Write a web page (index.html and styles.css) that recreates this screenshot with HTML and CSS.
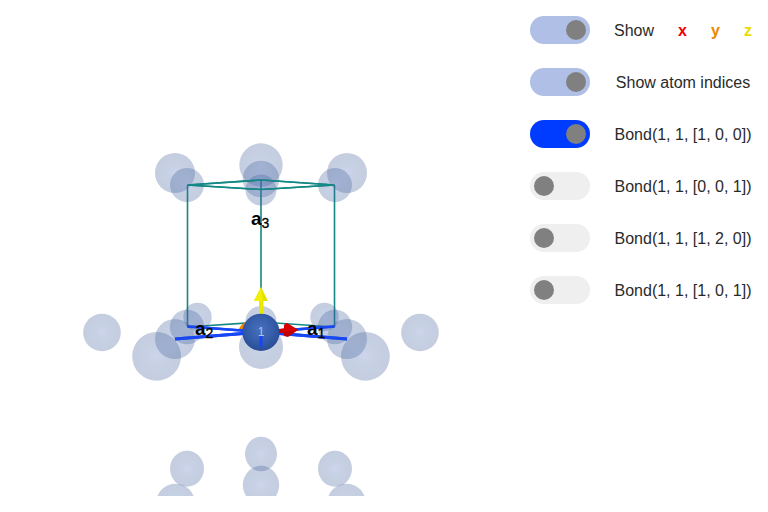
FILE: index.html
```html
<!DOCTYPE html>
<html lang="en">
<head>
<meta charset="utf-8">
<title>Crystal structure viewer</title>
<link rel="stylesheet" href="styles.css">
</head>
<body>
<main class="viewer">
  <svg class="scene" viewBox="16 16 490 480" role="img" aria-label="Crystal structure">
    <defs>
      <radialGradient id="ghost">
        <stop offset="0" stop-color="#5a74c0"/>
        <stop offset="0.35" stop-color="#4666a8"/>
        <stop offset="1" stop-color="#3c5c96"/>
      </radialGradient>
      <radialGradient id="solid" cx="0.48" cy="0.42" r="0.6">
        <stop offset="0" stop-color="#4770bd"/>
        <stop offset="0.5" stop-color="#3860ad"/>
        <stop offset="1" stop-color="#284c92"/>
      </radialGradient>
    </defs>

    <g class="cell">
      <path d="M187.5 185L261 180L334.5 185L261 189.5Z"/>
      <path d="M187.5 185V327M334.5 185V327M261 180V320"/>
      <path d="M187.5 327L261 322L334.5 327"/>
    </g>

    <path d="M239 329Q241 324 247 321V331Z" fill="#ef8400"/>
    <g class="bonds">
      <path d="M187.5 326.5L261 332L334.5 326.5"/>
      <path class="near" d="M175 339L261 332L347 339"/>
    </g>

    <g class="ghosts">
      <circle cx="175" cy="173" r="20"/>
      <circle cx="187" cy="185" r="17"/>
      <circle cx="347" cy="173" r="20"/>
      <circle cx="335" cy="185" r="17"/>
      <circle cx="261" cy="165" r="21.7"/>
      <circle cx="261" cy="179" r="18.3"/>
      <circle cx="261" cy="190" r="15.5"/>
      <circle cx="102" cy="332.5" r="18.8"/>
      <circle cx="420" cy="332.5" r="18.8"/>
      <circle cx="197.5" cy="317" r="14.2"/>
      <circle cx="324.5" cy="317" r="14.2"/>
      <circle cx="187" cy="327" r="17.2"/>
      <circle cx="335" cy="327" r="17.2"/>
      <circle cx="175" cy="339" r="20"/>
      <circle cx="347" cy="339" r="20"/>
      <circle cx="156.6" cy="356.3" r="24.4"/>
      <circle cx="365.4" cy="356.3" r="24.4"/>
      <circle cx="261" cy="321.5" r="15.5"/>
      <circle cx="261" cy="347" r="22"/>
      <ellipse cx="187" cy="468.7" rx="17" ry="18"/>
      <ellipse cx="335" cy="468.7" rx="17" ry="18"/>
      <ellipse cx="261" cy="454" rx="16" ry="17.2"/>
      <ellipse cx="261" cy="485" rx="18.2" ry="19.2"/>
      <circle cx="175.5" cy="503" r="19.3"/>
      <circle cx="346.5" cy="503" r="19.3"/>
    </g>

    <circle cx="261" cy="332.3" r="18.6" fill="url(#solid)"/>
    <path class="cell" d="M187.5 185L261 180L334.5 185L261 189.5Z"/>
    <g class="bonds">
      <path d="M187.5 326.5L243 330.5M283 330.5L334.5 326.5"/>
      <path class="near" d="M175 339L243 333.5M279 333.5L347 339"/>
      <path class="near" d="M261 335V347"/>
    </g>
    <path d="M279 329L285 328V333L279 333Z" fill="#d00000"/>
    <path d="M287 323L298 330L288 337L284 336L284 325Z" fill="#c00000"/>
    <path d="M287 323L298 330L284 332V325Z" fill="#d80000"/>
    <path d="M259 300H263.5V313.7H259Z" fill="#e8e800"/>
    <path d="M261 287L268 301H254Z" fill="#e2e000"/>
    <path d="M261 287L263 301H254Z" fill="#f2f000"/>

    <text class="index" x="261" y="336">1</text>
    <text class="axis" x="251" y="225">a<tspan class="sub" dy="3">3</tspan></text>
    <text class="axis" x="195" y="335">a<tspan class="sub" dy="3">2</tspan></text>
    <text class="axis" x="307" y="335">a<tspan class="sub" dy="3">1</tspan></text>
  </svg>

  <form class="controls">
    <div class="row">
      <input class="toggle" type="checkbox" role="switch" id="axes" checked>
      <label class="name axes" for="axes"><span>Show</span><b class="x">x</b><b class="y">y</b><b class="z">z</b></label>
    </div>
    <div class="row">
      <input class="toggle" type="checkbox" role="switch" id="indices" checked>
      <label class="name" for="indices">Show atom indices</label>
    </div>
    <div class="row">
      <input class="toggle bond" type="checkbox" role="switch" id="bond100" checked>
      <label class="name" for="bond100">Bond(1, 1, [1, 0, 0])</label>
    </div>
    <div class="row">
      <input class="toggle" type="checkbox" role="switch" id="bond001">
      <label class="name" for="bond001">Bond(1, 1, [0, 0, 1])</label>
    </div>
    <div class="row">
      <input class="toggle" type="checkbox" role="switch" id="bond120">
      <label class="name" for="bond120">Bond(1, 1, [1, 2, 0])</label>
    </div>
    <div class="row">
      <input class="toggle" type="checkbox" role="switch" id="bond101">
      <label class="name" for="bond101">Bond(1, 1, [1, 0, 1])</label>
    </div>
  </form>
</main>
</body>
</html>
```
FILE: styles.css
```css
* {
  box-sizing: border-box;
}

body {
  margin: 0;
  background: #fff;
  color: #2a2a2a;
  font: 16px/26px "Liberation Sans", Arial, sans-serif;
}

.viewer {
  display: flex;
  align-items: flex-start;
  gap: 24px;
  padding: 16px;
}

.scene {
  flex: 1;
  min-width: 0;
  display: block;
}

.cell {
  fill: none;
  stroke: #138884;
  stroke-width: 1.6;
}

.bonds {
  fill: none;
  stroke: #1747f5;
  stroke-width: 2.4;
}

.bonds .near {
  stroke-width: 3;
}

.ghosts {
  fill: url(#ghost);
  fill-opacity: 0.3;
}

.axis {
  fill: #000;
  font-size: 19px;
  font-weight: bold;
}

.axis .sub {
  font-size: 14px;
  font-weight: normal;
  stroke: #000;
  stroke-width: 0.3;
}

.index {
  fill: #b4c4e4;
  font-size: 12px;
  text-anchor: middle;
}

.controls {
  display: grid;
  gap: 24px;
}

.row {
  display: flex;
  align-items: center;
  gap: 24px;
}

.name {
  min-width: 138px;
  padding-top: 2px;
  text-align: center;
  white-space: nowrap;
}

.axes {
  display: flex;
  justify-content: space-between;
}

.x {
  color: #f00000;
}

.y {
  color: #f08600;
}

.z {
  color: #e8dc00;
}

.toggle {
  appearance: none;
  display: flex;
  align-items: center;
  width: 60px;
  height: 28px;
  margin: 0;
  padding: 0 4px;
  border-radius: 14px;
  background: #efefef;
}

.toggle::before {
  content: "";
  width: 20px;
  height: 20px;
  border-radius: 50%;
  background: #808080;
}

.toggle:checked {
  justify-content: flex-end;
  background: #afbfe6;
}

.bond:checked {
  background: #003cff;
}
```
